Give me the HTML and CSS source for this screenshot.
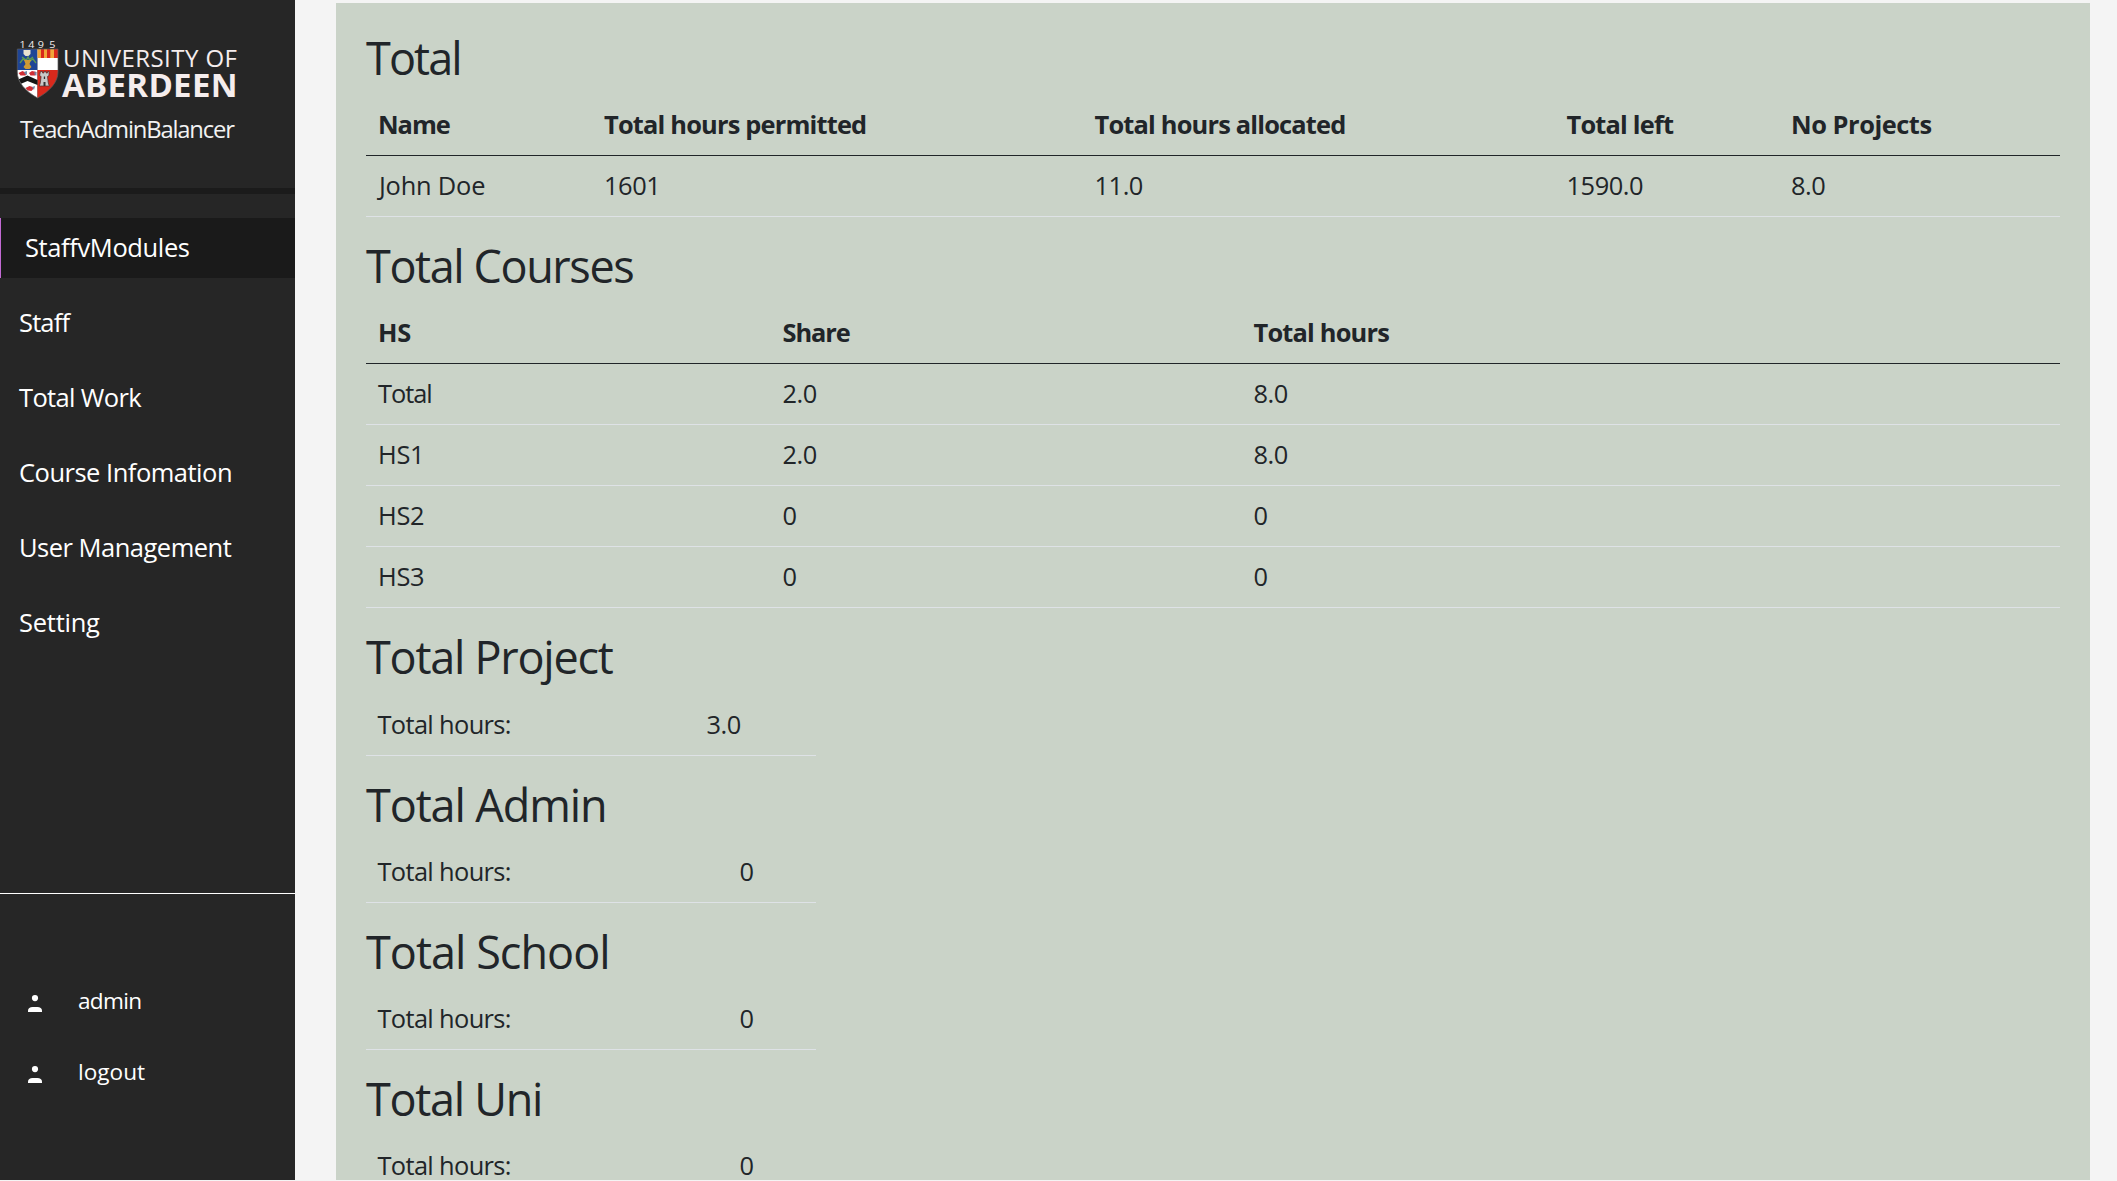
FILE: index.html
```html
<!DOCTYPE html>
<html lang="en">
<head>
<meta charset="utf-8">
<title>TeachAdminBalancer</title>
<link rel="stylesheet" href="styles.css">
</head>
<body>
<div class="app">
  <aside class="sidebar">
    <header class="brand">
      <svg class="logo" width="240" height="64" viewBox="0 0 240 64" role="img" aria-label="University of Aberdeen">
        <defs>
          <clipPath id="shield"><path d="M17.3 9H58V32C58 42 50 51 37.6 58C25 51 17.3 42 17.3 32Z"/></clipPath>
        </defs>
        <g class="logo-year"><text x="19.500" y="8">1</text><text x="28.300" y="8">4</text><text x="37.700" y="8">9</text><text x="49.300" y="8">5</text></g>
        <g clip-path="url(#shield)">
          <path fill="#1f4596" d="M17 9h20.5v21H17z"/>
          <path fill="#fff" d="M37.5 9H58v21H37.5zM17 30h20.5v29H17z"/>
          <path fill="#f0a63a" d="M37.5 9H58v9H37.5z"/>
          <path fill="#d9291c" d="M41 9h3v9h-3zM47 9h3.300v9h-3.300zM54 9h4v9h-4zM37.500 30H58v29H37.500z"/>
          <path fill="#e8e2d0" d="M23.500 10h7v4l-2 2h-3l-2-2z"/>
          <path fill="none" stroke="#5f9a50" stroke-width="1.300" d="M20 23l3-4 3 2 2-4 2 4 3-2 3 4M22 17l4 3M33 17l-4 3"/>
          <path fill="#cf9a35" d="M24 20h7l-1.500 4 2 3-2 2h-4l-2-2 2-3z"/>
          <path fill="#151515" d="M17 40L27.500 35.500L37.500 40V45L27.500 41L17 45.500z"/>
          <path fill="#cf2e35" d="M18.500 33l4-2 4 2-1 2.500h-5zM29 33l3-2 4.500 1-1 3.500h-5zM25.500 48l4-2 5 1.500-3 3.500-4-.5z"/>
          <path fill="#7186a5" d="M24 32l3-1v4l-2-1zM34.500 31.500l2 1v3l-2-1zM32 47l3-1-1 4z"/>
          <path fill="#c9c9c7" stroke="#4c3030" stroke-width=".7" d="M40.500 31.500h2v1.500h1.500v-1.500h2v1.500h1.500v-1.500h1.500v4l-1.500 1 .8 6.500 1 3h-10l1-3 .8-6.500-1.600-1z"/>
          <path fill="#333" d="M43.500 42h2v4h-2zM43.800 36.500h1.300v2.500h-1.300z"/>
        </g>
        <path fill="none" stroke="#5c5c5c" stroke-width=".7" d="M17.300 9H58V32C58 42 50 51 37.600 58C25 51 17.300 42 17.300 32Z"/>
        <text class="logo-top" x="63" y="26.800" textLength="174" lengthAdjust="spacing">UNIVERSITY OF</text>
        <text class="logo-main" x="62" y="57" textLength="175.500" lengthAdjust="spacing">ABERDEEN</text>
      </svg>
      <p class="product">TeachAdminBalancer</p>
    </header>
    <nav class="menu">
      <a class="item active">StaffvModules</a>
      <a class="item short">Staff</a>
      <a class="item words">Total Work</a>
      <a class="item">Course Infomation</a>
      <a class="item">User Management</a>
      <a class="item loose">Setting</a>
    </nav>
    <footer class="account">
      <a class="user"><svg class="person" width="14" height="18" viewBox="0 0 14 18"><circle cx="7" cy="3.100" r="3.100"/><path d="M0 17V15.500C0 13.200 2 12 4.500 12h5C12 12 14 13.200 14 15.500V17z"/></svg><span class="tight">admin</span></a>
      <a class="user"><svg class="person" width="14" height="18" viewBox="0 0 14 18"><circle cx="7" cy="3.100" r="3.100"/><path d="M0 17V15.500C0 13.200 2 12 4.500 12h5C12 12 14 13.200 14 15.500V17z"/></svg><span>logout</span></a>
    </footer>
  </aside>
  <main class="panel">
    <h2 class="h-total">Total</h2>
    <table class="summary">
      <colgroup><col class="c-name"><col class="c-permitted"><col class="c-allocated"><col class="c-left"><col></colgroup>
      <thead><tr><th class="snug">Name</th><th>Total hours permitted</th><th>Total hours allocated</th><th>Total left</th><th class="loose">No Projects</th></tr></thead>
      <tbody><tr><td class="person-name">John Doe</td><td class="num">1601</td><td class="num">11.0</td><td class="num">1590.0</td><td class="num">8.0</td></tr></tbody>
    </table>
    <h2 class="h-courses">Total Courses</h2>
    <table>
      <colgroup><col class="c-hs"><col class="c-share"><col></colgroup>
      <thead><tr><th class="hs">HS</th><th class="snug">Share</th><th>Total hours</th></tr></thead>
      <tbody>
        <tr><td class="snug">Total</td><td class="num">2.0</td><td class="num">8.0</td></tr>
        <tr><td class="hs">HS1</td><td class="num">2.0</td><td class="num">8.0</td></tr>
        <tr><td class="hs">HS2</td><td class="num">0</td><td class="num">0</td></tr>
        <tr><td class="hs">HS3</td><td class="num">0</td><td class="num">0</td></tr>
      </tbody>
    </table>
    <h2 class="h-project">Total Project</h2>
    <table class="small">
      <colgroup><col class="c-decimal"><col></colgroup>
      <tbody><tr><td>Total hours:</td><td class="num">3.0</td></tr></tbody>
    </table>
    <h2 class="h-admin">Total Admin</h2>
    <table class="small">
      <colgroup><col class="c-whole"><col></colgroup>
      <tbody><tr><td>Total hours:</td><td class="num">0</td></tr></tbody>
    </table>
    <h2 class="h-school">Total School</h2>
    <table class="small">
      <colgroup><col class="c-whole"><col></colgroup>
      <tbody><tr><td>Total hours:</td><td class="num">0</td></tr></tbody>
    </table>
    <h2 class="h-uni">Total Uni</h2>
    <table class="small">
      <colgroup><col class="c-whole"><col></colgroup>
      <tbody><tr><td>Total hours:</td><td class="num">0</td></tr></tbody>
    </table>
  </main>
</div>
</body>
</html>
```
FILE: styles.css
```css
* { box-sizing: border-box; }

body {
  margin: 0;
  height: 1181px;
  overflow: hidden;
  background: #f4f4f4;
  color: #212529;
  font-family: "Open Sans", "Noto Sans", sans-serif;
}

.app {
  display: flex;
  height: 1180px;
}

/* Sidebar */
.sidebar {
  display: flex;
  flex-direction: column;
  flex: none;
  width: 295px;
  margin-right: 41px;
  background: #262626;
  color: #fff;
  font-weight: 450;
}

.brand {
  height: 194px;
  padding-top: 40px;
  border-bottom: 6px solid #1b1b1b;
}

.logo { display: block; overflow: visible; }
.logo-year { fill: #f4eeee; font-size: 9px; }
.logo-year text { transform-box: fill-box; transform: scaleX(1.2); }
.logo-top { fill: #f5eded; font-size: 24px; }
.logo-main { fill: #f5eded; font-size: 33px; font-weight: 700; }

.product {
  margin: 5px 0 0 20px;
  color: #f2f2f2;
  font-size: 23.8px;
  line-height: 41px;
  letter-spacing: -1.17px;
}

.menu {
  display: flex;
  flex-direction: column;
  gap: 15px;
  padding-top: 24px;
}

.item {
  height: 60px;
  padding-left: 19px;
  font-size: 25.5px;
  line-height: 59px;
  letter-spacing: -0.5px;
}

.item.active {
  padding-left: 24px;
  border-left: 1px solid #c26ad4;
  background: #1a1a1a;
  letter-spacing: -0.38px;
}

.item.short { letter-spacing: -0.85px; }
.item.words { letter-spacing: -0.65px; }
.item.loose { letter-spacing: -0.25px; }

.account {
  display: flex;
  flex-direction: column;
  gap: 31px;
  height: 287px;
  margin-top: auto;
  padding-top: 87px;
  border-top: 1px solid #fff;
}

.user {
  display: flex;
  align-items: center;
  gap: 36px;
  height: 40px;
  padding-left: 28px;
  font-size: 22.6px;
  line-height: 40px;
}

.user .tight { letter-spacing: -0.7px; }
.person { fill: #fff; margin-top: 5px; }

/* Content panel */
.panel {
  width: 1754px;
  height: 1177px;
  margin-top: 3px;
  padding: 6px 30px 0;
  overflow: hidden;
  background: #cad3c8;
}

h2 {
  height: 86px;
  margin: 0;
  padding-top: 10px;
  font-size: 45px;
  font-weight: 400;
  line-height: 77px;
}

.h-total { letter-spacing: -1.9px; }
.h-courses { letter-spacing: -1.4px; }
.h-project { height: 87px; letter-spacing: -1.24px; }
.h-admin { letter-spacing: -1.1px; }
.h-school { letter-spacing: -0.97px; }
.h-uni { letter-spacing: -1.3px; }

table {
  width: 1694px;
  table-layout: fixed;
  border-spacing: 0;
  font-size: 25.4px;
}

.small { width: 450px; }

th, td {
  height: 61px;
  padding: 0 0 2px 12px;
  border-bottom: 1px solid #dee2e6;
  line-height: 58px;
  letter-spacing: -0.64px;
  text-align: left;
  white-space: nowrap;
}

.small td { padding-left: 11.5px; }

th {
  border-bottom-color: #212529;
  letter-spacing: -0.81px;
}

.snug { letter-spacing: -1.05px; }
.loose { letter-spacing: -0.46px; }
.hs { letter-spacing: -0.3px; }
.num { letter-spacing: -0.45px; }
.person-name { padding-left: 13px; letter-spacing: -0.2px; }

.c-name { width: 226px; }
.c-permitted { width: 490.5px; }
.c-allocated { width: 472px; }
.c-left { width: 224.5px; }
.c-hs { width: 404.5px; }
.c-share { width: 471px; }
.c-decimal { width: 329px; }
.c-whole { width: 362px; }
```
